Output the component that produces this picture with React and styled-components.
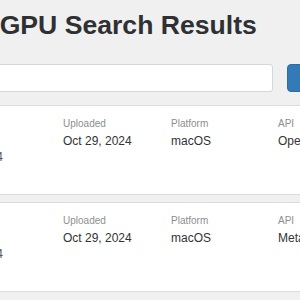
import React from "react"
import styled, { createGlobalStyle } from "styled-components"

const GlobalStyle = createGlobalStyle`
  html, body {
    margin: 0;
    padding: 0;
    background: #f0f0f0;
    overflow: hidden;
  }
  body {
    font-family: "Liberation Sans", Arial, Helvetica, sans-serif;
    color: #333;
  }
`

const Page = styled.div`
  width: 422px;
  margin-left: -55px;
  padding-top: 11px;
`

const Title = styled.h1`
  margin: 0 0 0 -1px;
  font-size: 26.6px;
  line-height: 29px;
  font-weight: 700;
  color: #2f3033;
`

const SearchRow = styled.form`
  display: flex;
  gap: 14px;
  margin-top: 24px;
`

const SearchInput = styled.input`
  flex: 1;
  height: 28px;
  box-sizing: border-box;
  border: 1px solid #d3d8de;
  border-radius: 3px;
  background: #fff;
  padding: 0 8px;
  font: inherit;
`

const SearchButton = styled.button`
  width: 80px;
  height: 28px;
  border: 1px solid #2e6da4;
  border-radius: 4px;
  background: #337ab7;
  color: #fff;
  font: inherit;
  font-size: 13px;
  padding: 0 12px;
`

const ResultList = styled.div`
  display: flex;
  flex-direction: column;
  gap: 7px;
  margin-top: 13px;
`

const Card = styled.div`
  background: #fff;
  border: 1px solid #dcdcdc;
  padding: 11px 9px 29px;
  display: grid;
  grid-template-columns: 108px 108px 107px 1fr;
`

const Field = styled.div`
  display: flex;
  flex-direction: column;
  white-space: nowrap;
`

const Label = styled.div`
  font-size: 10px;
  line-height: 14px;
  color: #8e8e8e;
`

const Value = styled.div`
  font-size: 12px;
  line-height: 16px;
  margin-top: 2px;
  color: #333;
`

const Meta = styled.div`
  font-size: 12px;
  line-height: 16px;
  color: #555;
`

const results = [
  { gpu: "M1 Pro", score: "Score 94", uploaded: "Oct 29, 2024", platform: "macOS", api: "OpenGL" },
  { gpu: "M1 Pro", score: "Score 94", uploaded: "Oct 29, 2024", platform: "macOS", api: "Metal" },
]

export default function App() {
  return (
    <>
      <GlobalStyle />
      <Page>
        <Title>WebGPU Search Results</Title>
        <SearchRow onSubmit={(e) => e.preventDefault()}>
          <SearchInput type="text" />
          <SearchButton type="submit">Search</SearchButton>
        </SearchRow>
        <ResultList>
          {results.map((r, i) => (
            <Card key={i}>
              <Field>
                <Label>GPU</Label>
                <Value>{r.gpu}</Value>
                <Meta>{r.score}</Meta>
              </Field>
              <Field>
                <Label>Uploaded</Label>
                <Value>{r.uploaded}</Value>
              </Field>
              <Field>
                <Label>Platform</Label>
                <Value>{r.platform}</Value>
              </Field>
              <Field>
                <Label>API</Label>
                <Value>{r.api}</Value>
              </Field>
            </Card>
          ))}
        </ResultList>
      </Page>
    </>
  )
}
